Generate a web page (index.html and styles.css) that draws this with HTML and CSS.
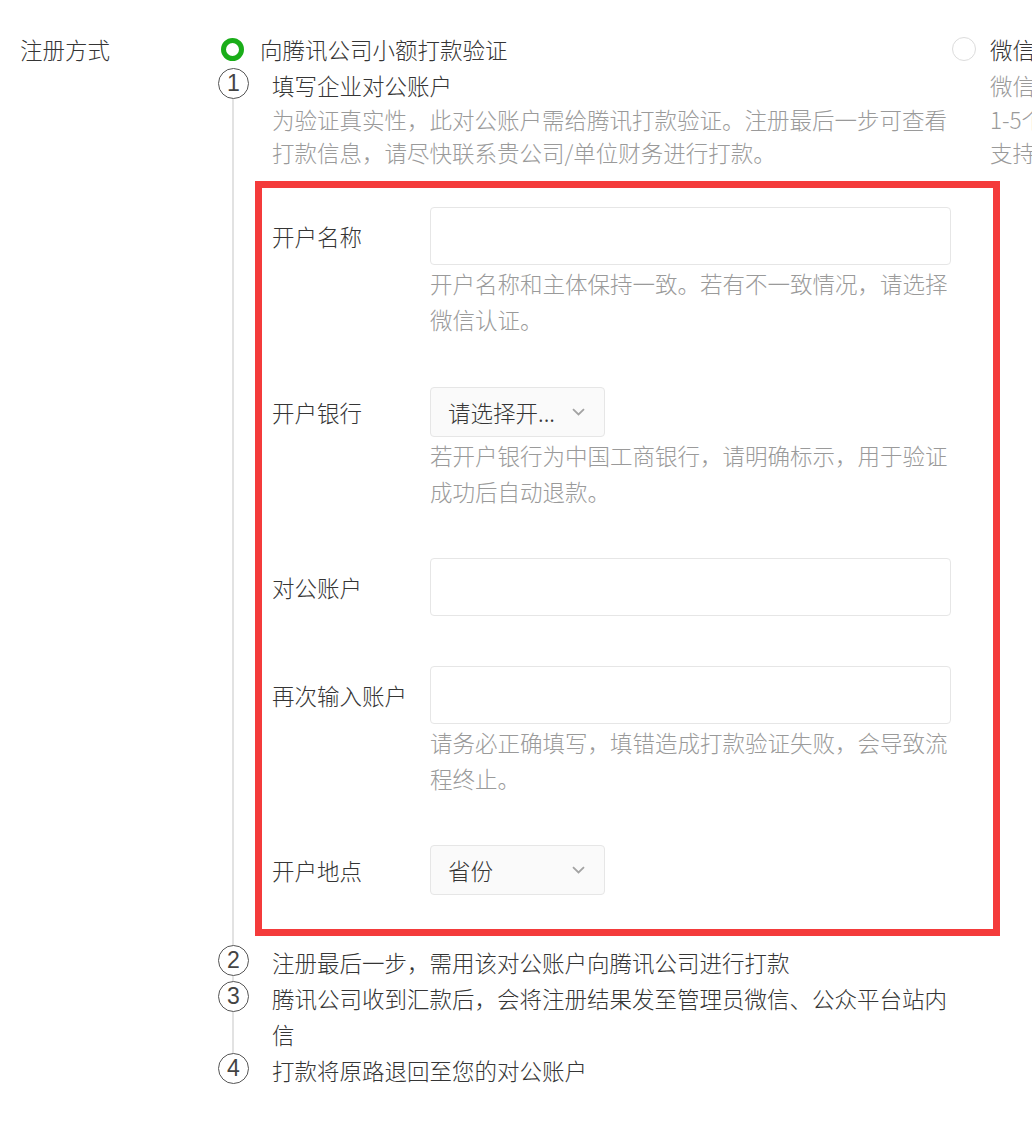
FILE: index.html
```html
<!DOCTYPE html>
<html lang="zh-CN">
<head>
    <meta charset="UTF-8">
    <meta name="viewport" content="width=device-width, initial-scale=1.0">
    <title>注册方式</title>
    <link rel="stylesheet" href="styles.css">
</head>
<body>
    <div class="page">
        <div class="page-label">注册方式</div>

        <div class="options">
            <div class="option option-main">
                <div class="option-head">
                    <span class="radio radio-checked"></span>
                    <span>向腾讯公司小额打款验证</span>
                </div>

                <ol class="steps">
                    <li class="step">
                        <span class="step-num">1</span>
                        <div class="step-body">
                            <div class="step-title">填写企业对公账户</div>
                            <div class="step-desc">为验证真实性，此对公账户需给腾讯打款验证。注册最后一步可查看打款信息，请尽快联系贵公司/单位财务进行打款。</div>

                            <div class="account-form">
                                <div class="field">
                                    <label class="field-label">开户名称</label>
                                    <input class="text-input" type="text">
                                    <div class="field-hint">开户名称和主体保持一致。若有不一致情况，请选择微信认证。</div>
                                </div>

                                <div class="field">
                                    <label class="field-label">开户银行</label>
                                    <div class="select">
                                        <span>请选择开...</span>
                                        <svg class="chevron" width="13" height="8" viewBox="0 0 13 8"><path d="M1 1.2l5.5 5.3 5.5-5.3" fill="none" stroke="#a3a3a3" stroke-width="1.8"/></svg>
                                    </div>
                                    <div class="field-hint">若开户银行为中国工商银行，请明确标示，用于验证成功后自动退款。</div>
                                </div>

                                <div class="field">
                                    <label class="field-label">对公账户</label>
                                    <input class="text-input" type="text">
                                </div>

                                <div class="field">
                                    <label class="field-label">再次输入账户</label>
                                    <input class="text-input" type="text">
                                    <div class="field-hint">请务必正确填写，填错造成打款验证失败，会导致流程终止。</div>
                                </div>

                                <div class="field">
                                    <label class="field-label">开户地点</label>
                                    <div class="select">
                                        <span>省份</span>
                                        <svg class="chevron" width="13" height="8" viewBox="0 0 13 8"><path d="M1 1.2l5.5 5.3 5.5-5.3" fill="none" stroke="#a3a3a3" stroke-width="1.8"/></svg>
                                    </div>
                                </div>
                            </div>
                        </div>
                    </li>
                    <li class="step">
                        <span class="step-num">2</span>
                        <div class="step-body">
                            <div class="step-title">注册最后一步，需用该对公账户向腾讯公司进行打款</div>
                        </div>
                    </li>
                    <li class="step">
                        <span class="step-num">3</span>
                        <div class="step-body">
                            <div class="step-title">腾讯公司收到汇款后，会将注册结果发至管理员微信、公众平台站内信</div>
                        </div>
                    </li>
                    <li class="step">
                        <span class="step-num">4</span>
                        <div class="step-body">
                            <div class="step-title">打款将原路退回至您的对公账户</div>
                        </div>
                    </li>
                </ol>
            </div>

            <div class="option option-alt">
                <div class="option-head">
                    <span class="radio"></span>
                    <span>微信认证</span>
                </div>
                <div class="alt-desc">
                    <div>微信认证需支付审核服务费</div>
                    <div>1-5个工作日完成审核</div>
                    <div>支持多种主体类型</div>
                </div>
            </div>
        </div>
    </div>
</body>
</html>
```

FILE: styles.css
```css
* {
    margin: 0;
    padding: 0;
    box-sizing: border-box;
}

body {
    font-family: "Noto Sans CJK SC", "Noto Sans", sans-serif;
    font-size: 22.5px;
    font-weight: 300;
    color: #353535;
    background-color: #fff;
    overflow: hidden;
}

.page {
    display: flex;
    padding: 31px 0 0 20px;
    width: 1032px;
}

.page-label {
    flex: none;
    width: 198px;
    line-height: 36px;
}

.options {
    display: flex;
}

.option {
    flex: none;
}

.option-main {
    width: 734px;
}

.option-head {
    display: flex;
    align-items: center;
    height: 36px;
    white-space: nowrap;
}

.radio {
    flex: none;
    width: 24px;
    height: 24px;
    margin-right: 14px;
    border: 1px solid #dcdcdc;
    border-radius: 50%;
}

.radio-checked {
    width: 23px;
    height: 23px;
    margin-left: 3px;
    margin-right: 16px;
    border: 5.5px solid #1aad19;
}

.steps {
    position: relative;
    list-style: none;
}

.steps::before {
    content: "";
    position: absolute;
    left: 14px;
    top: 20px;
    bottom: 20px;
    width: 2px;
    background-color: #e2e2e2;
}

.step {
    display: flex;
    align-items: flex-start;
}

.step-num {
    position: relative;
    flex: none;
    width: 31px;
    height: 31px;
    margin-top: 1px;
    margin-right: 23px;
    border: 1.8px solid #555;
    border-radius: 50%;
    background-color: #fff;
    font-family: "Liberation Sans", sans-serif;
    font-size: 23px;
    font-weight: 400;
    line-height: 28px;
    text-align: center;
    color: #444;
}

.step-body {
    width: 680px;
}

.step-title {
    line-height: 36px;
}

.step-desc {
    color: #9a9a9a;
    line-height: 33px;
}

.account-form {
    width: 745px;
    margin: 12px 0 8px -17px;
    padding: 19px 42px 34px 10px;
    border: 7px solid #f43b3b;
}

.field {
    display: grid;
    grid-template-columns: 158px 521px;
    margin-bottom: 49.5px;
}

.field:last-child {
    margin-bottom: 0;
}

.field-label {
    align-self: center;
    line-height: 36px;
}

.text-input {
    width: 521px;
    height: 58px;
    border: 1px solid #e6e6e6;
    border-radius: 4px;
    background-color: #fff;
    outline: none;
}

.select {
    display: flex;
    align-items: center;
    justify-content: space-between;
    width: 175px;
    height: 50px;
    padding: 0 19px 0 17px;
    border: 1px solid #e6e6e6;
    border-radius: 4px;
    background-color: #fafafa;
}

.field-hint {
    grid-column: 2;
    color: #9a9a9a;
    line-height: 36px;
}

.option-alt {
    width: 200px;
    white-space: nowrap;
}

.alt-desc {
    padding-left: 38px;
    color: #9a9a9a;
}

.alt-desc div:first-child {
    line-height: 36px;
}

.alt-desc div {
    line-height: 33px;
}
```
